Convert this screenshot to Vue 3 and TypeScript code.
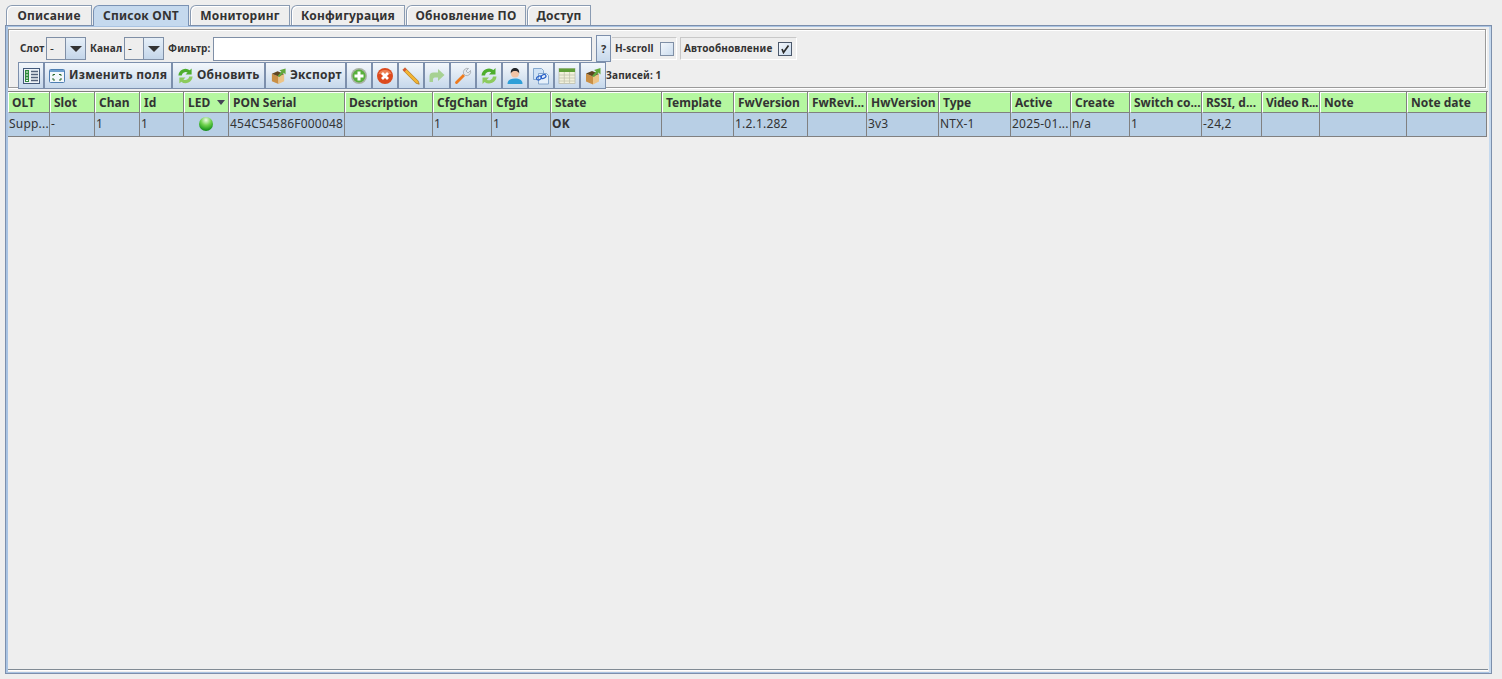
<script setup lang="ts">
const tabs: { name: string; width: number }[] = [
  { name: 'Описание', width: 86 },
  { name: 'Список ONT', width: 96 },
  { name: 'Мониторинг', width: 100 },
  { name: 'Конфигурация', width: 114 },
  { name: 'Обновление ПО', width: 120 },
  { name: 'Доступ', width: 64 },
]
const columns: { name: string; width: number; value: string }[] = [
  { name: 'OLT', width: 42, value: 'Supp...' },
  { name: 'Slot', width: 45, value: '-' },
  { name: 'Chan', width: 45, value: '1' },
  { name: 'Id', width: 44, value: '1' },
  { name: 'LED', width: 45, value: '' },
  { name: 'PON Serial', width: 116, value: '454C54586F000048' },
  { name: 'Description', width: 88, value: '' },
  { name: 'CfgChan', width: 59, value: '1' },
  { name: 'CfgId', width: 59, value: '1' },
  { name: 'State', width: 111, value: 'OK' },
  { name: 'Template', width: 72, value: '' },
  { name: 'FwVersion', width: 74, value: '1.2.1.282' },
  { name: 'FwRevi...', width: 59, value: '' },
  { name: 'HwVersion', width: 72, value: '3v3' },
  { name: 'Type', width: 72, value: 'NTX-1' },
  { name: 'Active', width: 60, value: '2025-01...' },
  { name: 'Create', width: 59, value: 'n/a' },
  { name: 'Switch co...', width: 72, value: '1' },
  { name: 'RSSI, d...', width: 60, value: '-24,2' },
  { name: 'Video R...', width: 58, value: '' },
  { name: 'Note', width: 87, value: '' },
  { name: 'Note date', width: 80, value: '' },
]
</script>

<template>
  <div class="root">
    <div class="tabs">
      <div v-for="(t, i) in tabs" :key="t.name" class="tab" :class="{ selected: i === 1 }" :style="{ width: t.width + 'px' }">{{ t.name }}</div>
    </div>
    <div class="pane">
      <div class="pane-inner">
        <div class="tools">
          <div class="row1">
            <span class="lbl w-slot">Слот</span>
            <div class="combo"><span class="val">-</span><span class="arrow"></span></div>
            <span class="lbl w-chan">Канал</span>
            <div class="combo"><span class="val">-</span><span class="arrow"></span></div>
            <span class="lbl w-filter">Фильтр:</span>
            <div class="input"></div>
            <div class="help">?</div>
            <div class="group g1"><span class="lbl">H-scroll</span><span class="check"></span></div>
            <div class="group g2">
              <span class="lbl">Автообновление</span>
              <span class="check on">
                <svg width="10" height="10" viewBox="0 0 10 10"><path d="M2 5 L3.500 8.500 L8.500 1.500" fill="none" stroke="#2b2b2b" stroke-width="1.700"/></svg>
              </span>
            </div>
          </div>
          <div class="row2">
            <button class="tb ic">
              <svg width="17" height="16" viewBox="0 0 17 16"><rect x=".5" y=".5" width="16" height="15" fill="#eef3f8" stroke="#43597a"/><rect x="2" y="2" width="4" height="12" fill="#2f8a3c"/><path d="M3 4h2M3 7h2M3 10h2M3 12.500h2" stroke="#fff"/><path d="M8 3.500h7M8 6.500h7M8 9.500h7M8 12.500h7" stroke="#53627a" stroke-width="1.300"/></svg>
            </button>
            <button class="tb txt" style="width:128px">
              <svg width="16" height="14" viewBox="0 0 16 14"><rect x=".5" y=".5" width="15" height="13" rx="1" fill="#f4f8fc" stroke="#4f7fb2"/><rect x="1" y="1" width="14" height="2" fill="#6fa0d0"/><path d="M4 7V5.500h2M10 5.500h2V7M12 9v2h-2M6 11H4V9" fill="none" stroke="#2d6a2d"/></svg>
              <span class="tbt">Изменить поля</span>
            </button>
            <button class="tb txt" style="width:93px">
              <svg width="17" height="18" viewBox="0 0 18 18"><use href="#refresh" /></svg>
              <span class="tbt m3">Обновить</span>
            </button>
            <button class="tb txt" style="width:81px">
              <svg width="17" height="18" viewBox="0 0 18 18"><use href="#box" /></svg>
              <span class="tbt m3">Экспорт</span>
            </button>
            <button class="tb ic">
              <svg width="18" height="18" viewBox="0 0 18 18"><circle cx="9" cy="9" r="8" fill="#a8b2a4"/><circle cx="9" cy="9" r="6.500" fill="#58b03c"/><path d="M9 4.500v9M4.500 9h9" stroke="#fff" stroke-width="3"/></svg>
            </button>
            <button class="tb ic">
              <svg width="18" height="18" viewBox="0 0 18 18"><circle cx="9" cy="9" r="8" fill="#dc4a1e"/><path d="M2.500 7a6.800 5.500 0 0 1 13 0z" fill="#f59a6e" opacity=".7"/><path d="M6 6l6 6M12 6l-6 6" stroke="#fff" stroke-width="2.800"/></svg>
            </button>
            <button class="tb ic">
              <svg width="18" height="18" viewBox="0 0 18 18"><path d="M.8 3 L3 .8 L16.200 14 L17.200 17.200 L14 16.200 Z" fill="#f3b431" stroke="#a9761b" stroke-width=".7"/><path d="M.8 3L3 .8l1.700 1.700L2.500 4.700z" fill="#d9553a"/></svg>
            </button>
            <button class="tb ic">
              <svg width="18" height="18" viewBox="0 0 18 18"><path d="M1.500 15V9.500A4 4 0 0 1 5.500 5.500H10V2l6.500 6-6.500 6v-3.500H7c-1.500 0-2 1-2 2.500v2z" fill="#a6d192"/></svg>
            </button>
            <button class="tb ic">
              <svg width="18" height="18" viewBox="0 0 18 18"><path d="M1.500 14.500L9 7l2 2-7.500 7.500a1.400 1.400 0 0 1-2-2z" fill="#ee7a1c"/><path d="M9.500 6.500a4 4 0 0 1 5-5L12 4l2 2 2.500-2.500a4 4 0 0 1-5 5z" fill="#e3e6e9" stroke="#8a929a" stroke-width=".6"/></svg>
            </button>
            <button class="tb ic">
              <svg width="18" height="18" viewBox="0 0 18 18"><use href="#refresh" /></svg>
            </button>
            <button class="tb ic">
              <svg width="18" height="18" viewBox="0 0 18 18"><path d="M1.500 17c0-4 3-5.500 7.500-5.500s7.500 1.500 7.500 5.500z" fill="#2f9fd8"/><circle cx="9" cy="6.500" r="4" fill="#f1c4a6"/><path d="M4.800 6.500C4.500 2.500 6.500 1 9 1s4.500 1.500 4.200 5.500c-.8-2-2.500-2.500-4.200-2.500s-3.400.5-4.200 2.500z" fill="#23262b"/></svg>
            </button>
            <button class="tb ic">
              <svg width="18" height="18" viewBox="0 0 18 18"><path d="M1.500 1.500h8l2 2v9h-10z" fill="#cfe2f5" stroke="#6f97c4" stroke-width=".8"/><path d="M6.500 6.500h8l2 2v8.500h-10z" fill="#e6f0fa" stroke="#6f97c4" stroke-width=".8"/><ellipse cx="7" cy="11" rx="2.600" ry="1.800" fill="none" stroke="#2b62c9" stroke-width="1.200" transform="rotate(-30 7 11)"/><ellipse cx="11.500" cy="9.500" rx="2.600" ry="1.800" fill="none" stroke="#2b62c9" stroke-width="1.200" transform="rotate(-30 11.500 9.500)"/></svg>
            </button>
            <button class="tb ic">
              <svg width="18" height="18" viewBox="0 0 18 18"><rect x="1" y="1.500" width="16" height="15" fill="#f1f1dc" stroke="#b7b8a5" stroke-width=".7"/><rect x="1" y="1.500" width="16" height="3.500" fill="#5f9e38"/><path d="M1 8h16M1 11h16M1 14h16M6.300 5v11M11.600 5v11" stroke="#c3c4ad" stroke-width=".8"/></svg>
            </button>
            <button class="tb ic">
              <svg width="18" height="18" viewBox="0 0 18 18"><use href="#box" /></svg>
            </button>
            <span class="lbl">Записей: 1</span>
          </div>
        </div>
      </div>
      <div class="table">
        <div class="thead">
          <div v-for="c in columns" :key="c.name" class="th" :class="{ tight: c.name === 'Video R...' }" :style="{ width: c.width + 'px' }">
            <span>{{ c.name }}</span>
            <span v-if="c.name === 'LED'" class="sort"></span>
          </div>
        </div>
        <div class="tr">
          <div v-for="c in columns" :key="c.name" class="td" :class="{ bold: c.name === 'State', led: c.name === 'LED' }" :style="{ width: c.width + 'px' }">
            <span v-if="c.name === 'LED'" class="dot"></span>
            <template v-else>{{ c.value }}</template>
          </div>
        </div>
      </div>
    </div>
    <svg width="0" height="0" class="defs">
      <defs>
        <g id="refresh">
          <path d="M1.500 8.500a7.500 7.500 0 0 1 12-5.500L15.500 1v6.500h-6.500l2.200-2.200A4.200 4.200 0 0 0 5 8.500z" fill="#4dae2e"/>
          <path d="M16.500 9.500a7.500 7.500 0 0 1-12 5.500L2.500 17v-6.500h6.500l-2.200 2.200A4.200 4.200 0 0 0 13 9.500z" fill="#8ccb5e"/>
        </g>
        <g id="box">
          <path d="M2 6.500L9 9.500V17.500L2 14.500z" fill="#c98f45"/>
          <path d="M9 9.500L15 7V14.500L9 17.500z" fill="#edc486"/>
          <path d="M2 6.500L8 4L15 7L9 9.500z" fill="#5f4520"/>
          <path d="M8 9L12 4.500L10 3L16.500 1V7.500L14.500 5.500L10 10z" fill="#62a83c"/>
        </g>
      </defs>
    </svg>
  </div>
</template>

<style scoped>
.root {
  width: 1502px;
  height: 679px;
  box-sizing: border-box;
  padding: 5px 10px 5px 5px;
  display: flex;
  flex-direction: column;
  font-family: "Noto Sans", sans-serif;
  color: #333;
  background: #eeeeee;
  overflow: hidden;
}
.defs { position: absolute; }
.tabs {
  display: flex;
  gap: 1px;
  padding-left: 1px;
  height: 20px;
  position: relative;
  z-index: 1;
}
.tab {
  box-sizing: border-box;
  height: 20px;
  border: 1px solid #8a9bb2;
  border-bottom: 0;
  border-top-left-radius: 6px 6px;
  background: #eeeeee;
  font-size: 12px;
  font-weight: 700;
  letter-spacing: .2px;
  line-height: 20px;
  text-align: center;
  white-space: nowrap;
  color: #333;
  box-shadow: inset 1px 1px 0 #fff;
  flex: none;
}
.tab.selected {
  background: #c5d9ee;
  height: 21px;
  border-color: #7a92b4;
  margin-bottom: -1px;
  box-shadow: none;
}
.pane {
  flex: 1;
  min-height: 0;
  border: 1px solid #7c8fac;
  box-sizing: border-box;
  box-shadow: inset 2px 0 0 #a9c3e2, inset 0 1px 0 #a9c3e2, inset -2px 0 0 #c5d9ee, inset 0 -1px 0 #a9c3e2;
  padding: 3px 3px 4px 1px;
  display: flex;
  flex-direction: column;
  position: relative;
}
.pane::after {
  content: "";
  position: absolute;
  left: 2px;
  right: 3px;
  bottom: 3px;
  border-bottom: 1px solid #808a94;
  box-shadow: 0 1px 0 #fff;
}
.pane-inner {
  height: 59px;
  flex: none;
  box-sizing: border-box;
  border: 1px solid #9a9a9a;
  box-shadow: inset 1px 1px 0 #fff, 1px 1px 0 #fff;
  position: relative;
  margin: 0 2px 0 1px;
}
.tools {
  padding: 6px 0 0 11px;
  display: flex;
  flex-direction: column;
}
.row1 {
  display: flex;
  align-items: center;
  height: 25px;
  position: relative;
}
.lbl {
  font-size: 10px;
  font-weight: 700;
  letter-spacing: .15px;
  white-space: nowrap;
  color: #333;
  padding-bottom: 2px;
}
.w-slot { width: 25px; flex: none; }
.w-chan { width: 33px; flex: none; margin-left: 4px; }
.w-filter { width: 44px; flex: none; margin-left: 4px; }
.combo {
  width: 40px;
  height: 23px;
  box-sizing: border-box;
  border: 1px solid #7f8fa6;
  display: flex;
  margin: 0 0 0 1px;
  background: #eeeeee;
  flex: none;
}
.val {
  width: 19px;
  font-size: 12px;
  line-height: 21px;
  padding-left: 3px;
  box-sizing: border-box;
  border-right: 1px solid #7f8fa6;
}
.arrow {
  flex: 1;
  position: relative;
  background: linear-gradient(#e6eff8, #c4d6ea);
}
.arrow::after {
  content: "";
  position: absolute;
  left: 4px;
  top: 8px;
  border: 6px solid transparent;
  border-top: 6px solid #333;
  border-bottom: 0;
}
.input {
  width: 379px;
  height: 24px;
  box-sizing: border-box;
  background: #fff;
  border: 1px solid #7f8fa6;
  margin-left: 1px;
  flex: none;
}
.help {
  width: 15px;
  height: 27px;
  box-sizing: border-box;
  border: 1px solid #7c8fac;
  margin-left: 4px;
  background: linear-gradient(#eff5fb, #c8d9ec);
  font-size: 11px;
  font-weight: 700;
  text-align: center;
  line-height: 25px;
  flex: none;
}
.group {
  box-sizing: border-box;
  height: 23px;
  display: flex;
  align-items: center;
  padding-left: 3px;
  border: 1px solid #c8c8c8;
  border-bottom-color: #fff;
  border-right-color: #fff;
  flex: none;
}
.g1 { width: 65px; margin-left: 1px; border-left: 0; }
.g2 { width: 117px; margin-left: 3px; }
.check {
  width: 14px;
  height: 14px;
  box-sizing: border-box;
  border: 1px solid #7f8fa6;
  background: linear-gradient(135deg, #f2f6fb, #cbdcee);
  margin-left: 6px;
  display: flex;
  align-items: center;
  justify-content: center;
  flex: none;
}
.g2 .check { margin-left: 6px; border-color: #4b586b; }
.row2 {
  display: flex;
  align-items: center;
  height: 27px;
  margin-top: 1px;
  margin-left: -2px;
  position: relative;
}
.tb {
  width: 26px;
  height: 27px;
  box-sizing: border-box;
  border: 1px solid #7c8fac;
  margin: 0;
  padding: 0;
  background: linear-gradient(#f3f7fb, #c6d8eb);
  display: flex;
  align-items: center;
  justify-content: center;
  font-family: inherit;
  flex: none;
}
.tb.txt { justify-content: flex-start; padding-left: 4px; }
.tbt {
  font-size: 12px;
  font-weight: 700;
  letter-spacing: .25px;
  color: #333;
  margin-left: 4px;
  white-space: nowrap;
  padding-bottom: 2px;
}
.tbt.m3 { margin-left: 3px; }
.table {
  margin-top: 3px;
  flex: none;
  width: 1480px;
  border-top: 1px solid #808080;
  margin-left: 1px;
}
.thead, .tr { display: flex; }
.th {
  box-sizing: border-box;
  height: 21px;
  background: #b5f7a0;
  border-left: 1px solid #fff;
  border-right: 1px solid #808080;
  border-bottom: 1px solid #808080;
  box-shadow: inset 0 1px 0 #fff;
  padding-left: 3px;
  font-size: 12px;
  font-weight: 700;
  line-height: 21px;
  white-space: nowrap;
  overflow: hidden;
  position: relative;
  color: #333;
  flex: none;
}
.th.tight { letter-spacing: -.25px; }
.sort {
  position: absolute;
  right: 3px;
  top: 8px;
  border: 4px solid transparent;
  border-top: 5px solid #445;
  border-bottom: 0;
}
.td {
  box-sizing: border-box;
  height: 24px;
  background: #b8cfe5;
  border-right: 1px solid #808080;
  border-bottom: 1px solid #808080;
  padding-left: 1px;
  font-size: 12px;
  letter-spacing: .2px;
  line-height: 22px;
  white-space: nowrap;
  overflow: hidden;
  color: #333;
  flex: none;
}
.td.bold { font-weight: 700; }
.td.led { display: flex; align-items: center; justify-content: center; padding-right: 0; padding-left: 0; }
.dot {
  width: 14px;
  height: 14px;
  border-radius: 50%;
  background: radial-gradient(circle at 50% 22%, #eefbe8 0, #6fd24e 40%, #1f9a20 75%, #0e6e14 100%);
  margin-top: -2px;
}
</style>

<style>
html, body { margin: 0; background: #eeeeee; }
</style>
